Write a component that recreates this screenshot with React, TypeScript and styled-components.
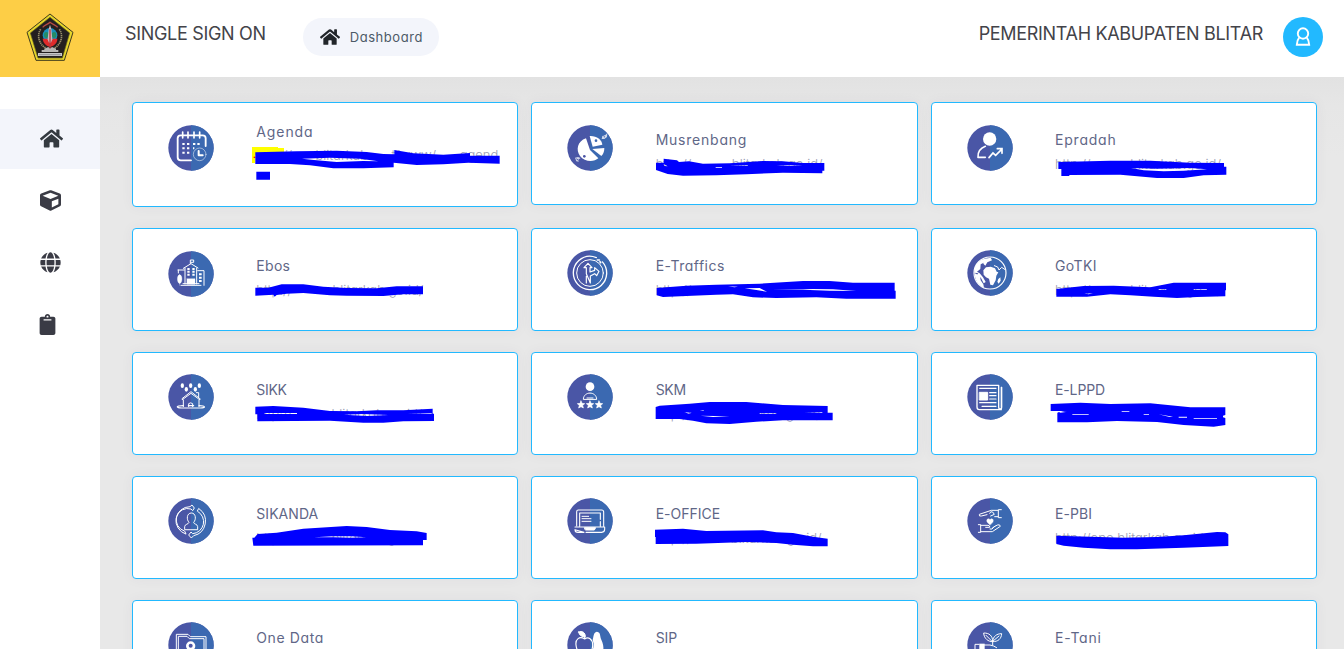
import React from 'react';
import styled, { createGlobalStyle } from 'styled-components';
import { FaHome, FaCube, FaGlobe, FaClipboard } from 'react-icons/fa';

const GlobalStyle = createGlobalStyle`
  * { box-sizing: border-box; }
  body {
    margin: 0;
    overflow: hidden;
    font-family: Inter, 'Open Sans', sans-serif;
    font-feature-settings: 'cv11' 1, 'calt' 0;
    color: #434349;
  }
`;

const Page = styled.div`
  display: grid;
  grid-template: 77px 1fr / 100px 1fr;
  height: 100vh;
  overflow: hidden;
`;

const Brand = styled.a`
  display: flex;
  justify-content: center;
  padding-top: 13px;
  background: #fdce46;
`;

const Header = styled.header`
  display: flex;
  align-items: flex-start;
  padding: 17px 21px 0 25px;
  background: #fff;
`;

const Heading = styled.h1<{ $tracking: number }>`
  margin: 5px 0 0;
  font-size: 18px;
  font-weight: 400;
  line-height: 24px;
  white-space: nowrap;
  letter-spacing: ${(p) => p.$tracking}px;
`;

const Pill = styled.a`
  display: flex;
  align-items: center;
  gap: 10px;
  width: 136px;
  height: 38px;
  margin: 1px auto 0 37px;
  padding-left: 17px;
  border-radius: 19px;
  background: #f3f5fb;
  color: #4c5a67;
  font-size: 13px;
  letter-spacing: 0.55px;
  svg { color: #212529; }
`;

const Avatar = styled.button`
  display: flex;
  align-items: center;
  justify-content: center;
  width: 40px;
  height: 40px;
  margin-left: 20px;
  padding: 0;
  border: 0;
  border-radius: 50%;
  background: #22b9ff;
`;

const Sidebar = styled.nav`
  display: flex;
  flex-direction: column;
  gap: 2px;
  padding-top: 32px;
  background: #fff;
`;

const NavItem = styled.a<{ $active?: boolean }>`
  display: flex;
  align-items: center;
  height: 60px;
  padding: 0 0 1px 40px;
  background: ${(p) => (p.$active ? '#f3f5fb' : 'transparent')};
  color: ${(p) => (p.$active ? '#343a40' : '#3a3b45')};
`;

const Clip = styled(FaClipboard)`
  margin-left: -2.6px;
`;

const Content = styled.main`
  padding: 25px 27px 0 32px;
  overflow: hidden;
  background: linear-gradient(#e2e2e2, #e6e6e6 28px, #e8e8e8 80px);
`;

const CardGrid = styled.div`
  display: grid;
  grid-template-columns: repeat(3, 1fr);
  gap: 21px 13px;
  align-items: start;
`;

const Card = styled.article<{ $tall?: boolean }>`
  position: relative;
  display: flex;
  height: ${(p) => (p.$tall ? 105 : 103)}px;
  padding: 22px 0 0 35px;
  border: 1px solid #22b9ff;
  border-radius: 4px;
  background: #fff;
  box-shadow: 0 0 13px rgba(82, 63, 105, 0.05);
`;

const Badge = styled.svg<{ $lift: boolean }>`
  flex: none;
  width: 46px;
  height: 46px;
  margin-top: ${(p) => (p.$lift ? -1 : 0)}px;
`;

const Info = styled.div<{ $raised?: boolean }>`
  margin: ${(p) => (p.$raised ? -3 : 5)}px 0 0 42.3px;
`;

const Title = styled.h2<{ $tracking: number }>`
  margin: 0;
  font-size: 14px;
  font-weight: 400;
  line-height: 20px;
  color: #5f6787;
  white-space: nowrap;
  letter-spacing: ${(p) => p.$tracking}px;
`;

const Link = styled.div<{ $width: number; $tight?: boolean }>`
  display: flex;
  justify-content: space-between;
  width: ${(p) => p.$width}px;
  margin-top: ${(p) => (p.$tight ? 4 : 5)}px;
  font-size: 13px;
  font-weight: 300;
  line-height: 18px;
  color: #9a9db3;
`;

const Marker = styled.svg`
  position: absolute;
  top: -1px;
  left: -1px;
  width: calc(100% + 2px);
  height: calc(100% + 2px);
  overflow: visible;
`;

const glyphs: Record<string, React.ReactNode> = {
  agenda: (
    <>
      <path d="M44 -6V-29q0-9-9-9H-31q-9 0-9 9V28q0 9 9 9H0" strokeWidth="5.5" />
      <path d="M-25-48v18M-9-48v18M9-48v18M26-48v18" strokeWidth="5" />
      <path d="M-26-12h7M-12-12h7M6-12h7M19-12h7M-26 1h7M-12 1h7M-26 14h7M-12 14h7M6 1h4" strokeWidth="6" strokeLinecap="butt" />
      <circle cx="26" cy="19" r="19" strokeWidth="2" opacity="0.75" />
      <path d="M23 9v13h12" strokeWidth="6" />
    </>
  ),
  pie: (
    <>
      <g fill="#fff" stroke="none">
        <path d="M-12-29C-38-20-43 6-30 24C-16 43 13 42 25 31L0 6Z" />
        <path d="M-1-36C20-37 35-26 37-10L8-4Z" />
        <path d="M7 3L43 0C43 11 40 18 34 24Z" />
        <path d="M37-36l9-3 6-6-1 12-8 6h-8zM-45 29l9-2 8 3-7 5 1 6-7-1z" opacity="0.75" />
      </g>
      <circle cx="18" cy="-22" r="4" fill="#3d69b1" stroke="none" />
      <circle cx="-17" cy="25" r="4" fill="#4b55a5" stroke="none" />
      <path d="M41-36l3 3M-40 33l4 3" stroke="#4b5eaa" strokeWidth="3" />
    </>
  ),
  person: (
    <>
      <circle cx="-1" cy="-27" r="20" fill="#fff" stroke="none" />
      <path d="M-14-5C-30 1-37 12-36 28H-14" strokeWidth="5" />
      <path d="M-3 29L9 15L17 22L35 4M22 2H36V16" strokeWidth="5" strokeLinejoin="miter" />
    </>
  ),
  school: (
    <>
      <path d="M-18-18V30M17-18V30M-23-17L0-31L21-18M-2-31V-42H8V-35H0M-39-12H-20M-38-12v9M20-10H39V34M-30 34H30M-24 29H24" />
      <path d="M-11-15h7M4-15h7M-11-7h7M4-7h7M-11 2h7M4 2h7M24 1h8M24 11h8M24 21h8" strokeWidth="6" strokeLinecap="butt" />
      <path d="M-12 14H12V31H-12ZM-34 2c9 0 9 24 0 27c-9-3-9-27 0-27ZM-34 28v6" fill="#fff" strokeWidth="1" />
    </>
  ),
  road: (
    <>
      <circle r="50" strokeWidth="4" strokeDasharray="290 25" transform="rotate(-42)" />
      <circle r="40" strokeWidth="3" />
      <path d="M-11 30V10M-11 2V-16H-18L-6-29L6-16H0V-3L14-8V-16L27-5L20 8L14 2L1 9V30Z" strokeWidth="3.5" />
      <path d="M22-39l6 0M30-34l2 3" strokeWidth="5" />
    </>
  ),
  earth: (
    <>
      <circle r="48" strokeWidth="3.5" />
      <g fill="#fff" stroke="none">
        <path d="M-22-41C-38-34-48-18-47-1l12 2-5 6 7 3 6 5 8 16 6-4-8-14-10-12-8-5 10-8 1-14 14-7 5-10-8 1z" />
        <path d="M-46 0C-46 22-34 38-18 44L-20 34L-28 22L-30 10Z" />
        <path d="M-20-8l8-9 14-2 13 5 5 10 5 2-6 10-2 14-8 15-8-2-4-18-9-4-7-8z" />
        <path d="M-18-42L2-46L6-38L-8-32L-14-22L-20-28ZM25 18l6-5 1 10-6 9-4-6z" />
      </g>
      <path d="M13-22l10 4 4 9 8-8 9 6" strokeWidth="3" />
    </>
  ),
  rain: (
    <>
      <g fill="#fff" stroke="none">
        <ellipse cx="-26" cy="-34" rx="5" ry="7" /><ellipse cx="-1" cy="-34" rx="5" ry="7" />
        <ellipse cx="25" cy="-34" rx="5" ry="7" /><ellipse cx="-14" cy="-23" rx="5" ry="7" />
        <ellipse cx="13" cy="-23" rx="5" ry="7" />
      </g>
      <path d="M-27 5L0-16L28 6M-26 8L0-11L26 8M-23 9V29M24 9V29M16-13h7V0M-7 29V20q6-5 12 0v9" />
      <path d="M-23 26C-48 26-45 33-28 33H28C45 33 45 26 24 26M-8 26H8" strokeWidth="3.5" />
    </>
  ),
  rating: (
    <>
      <circle cx="0" cy="-31" r="13" fill="#fff" stroke="none" />
      <path d="M-20 6C-19-18 19-18 20 6ZM-9 3H9" />
      <g fill="#fff" stroke="#fff" strokeWidth="2">
        {[-27, 0, 27].map((x) => (
          <path key={x} transform={`translate(${x} 23)`} d="M0-11L3-4L11-3L5 2L7 10L0 6L-7 10L-5 2L-11-3L-3-4Z" />
        ))}
      </g>
    </>
  ),
  news: (
    <>
      <path d="M-39-35H26V31q0 7 8 7H-32q-7 0-7-8ZM34-29V31M35-29V30q0 8-7 8" strokeWidth="4" />
      <path d="M-31-26H18M-1-13H18M-1-4H18M-1 6H18M-31 17H18M-24 28H18" strokeWidth="3.5" />
      <path d="M-31-14H-7V9H-31Z" fill="#fff" />
    </>
  ),
  cycle: (
    <>
      <path d="M-16 39A42 42 0 0 1-3-43L3-48L10-39L5-31L0-36A34 34 0 0 0-20 30ZM24-37A45 45 0 0 1 8 44L1 51L-7 42L0 33L5 38A36 36 0 0 0 20-29Z" />
      <path d="M-19 25V17C-19 9-7 10-6 4C-14-4-13-24 1-24S16-4 8 4C8 10 20 9 20 17V25Z" />
    </>
  ),
  laptop: (
    <>
      <path d="M-40 14V-28q0-5 5-5H35q6 0 6 6V15M-31 15V-24H31V-5M31 2V15M-45 18H44V25q0 9-9 9H-12M-18 34H-36q-9 0-9-8Z" strokeWidth="3.3" />
      <path d="M-16 20H17L13 27H-13Z" fill="#fff" />
      <path d="M-24-14H-4M-24-7H3M-24 1H3" />
    </>
  ),
  hands: (
    <>
      <path d="M34-34H25V-10H34M24-32H4L-32-20q-2 7 6 5L-9-19M-1-23q3-8 9-4l5 7-11 5M14-13H24" />
      <path d="M-35 11H-28V34H-35M-27 13H-6q7 1 5 6H-13M-27 32H7L31 16q-1-7-9-4L8 20M0 24H6l9-9" />
      <path d="M0 12L-9 3C-13-7-2-10 0-4C3-10 13-7 9 3Z" fill="#fff" strokeWidth="1" />
    </>
  ),
  folder: (
    <>
      <path d="M-44 38V-32H-9L-2-25H45V38M-38 38V-26H-12L-5-19H39V38" />
      <circle cx="-1" cy="3" r="14" fill="#fff" stroke="none" />
      <circle cx="-1" cy="2" r="6" fill="#4b55a5" stroke="none" />
    </>
  ),
  fruit: (
    <>
      <path d="M-16-18C-32-28-44-17-42 0C-40 20-26 34-16 27C-4 34 8 18 8 0C8-18-5-26-16-18ZM-16-18V-28" strokeWidth="3.5" />
      <path d="M-34-39C-23-44-14-37-14-25C-24-24-32-28-34-39Z" fill="#fff" />
      <path d="M20-40C10-38 11-24 8-16L11-4C11 12 6 18 3 27H35C46 8 37-8 33-18C30-29 31-40 20-40Z" fill="#fff" stroke="none" />
    </>
  ),
  plant: (
    <>
      <path d="M8 0V-10C-5-10-18-19-19-36C-3-36 8-29 8-10C9-26 20-34 35-34C34-18 24-10 9-10M-12-29L7-10L27-27M-45 30V-2H-33M-17 0H0q12 2 20 8" />
      <rect x="-32" y="-4" width="16" height="30" fill="#fff" stroke="none" />
    </>
  ),
};

const AppBadge = ({ name, lift }: { name: string; lift: boolean }) => (
  <Badge viewBox="-69 -69 138 138" $lift={lift}>
    <circle r="68" fill="#4a56a6" />
    <path d="M0-68A68 68 0 0 1 0 68Z" fill="#3b69b1" />
    <g fill="none" stroke="#fff" strokeWidth="3" strokeLinecap="round" strokeLinejoin="round">
      {glyphs[name]}
    </g>
  </Badge>
);

type AppEntry = {
  title: string;
  icon: string;
  tracking: number;
  tall?: boolean;
  link?: string[];
  linkWidth?: number;
  origin?: [number, number];
  strokes?: string;
  gaps?: string;
};

const host = ['http://', 'blitarkab.go.id/'];

const apps: AppEntry[] = [
  {
    title: 'Agenda', icon: 'agenda', tracking: 0.9, tall: true,
    link: ['http://', 'blitarkab', 't/www/', 'agend'], linkWidth: 242, origin: [6, 21],
    strokes: 'M376 172L500 169L620 167L710 171L760 177L793 178V165L850 175L940 179L1020 174V182H1109V206L1015 203L940 208L860 210L791 203V217L700 220L610 220L540 211L480 207H376ZM379 230H420V254H379Z',
    gaps: 'M516 191L600 188L690 191L745 199L700 198L620 201L552 195Z',
  },
  {
    title: 'Musrenbang', icon: 'pie', tracking: 0.78, link: host, linkWidth: 167, origin: [4, 21],
    strokes: 'M379 203H402V191L442 196L448 201L478 199L520 206L600 205L700 198L760 199L820 204H884V227H878V235L760 233L650 238L560 241L460 242L414 237L379 225Z',
    gaps: 'M402 207L414 214L404 213ZM558 216H577V218H558ZM600 213L655 211V213ZM740 211H780L819 213L780 213Z',
  },
  {
    title: 'Epradah', icon: 'person', tracking: 0.8, link: host, linkWidth: 166, origin: [2, 21],
    strokes: 'M384 201L540 197L660 197L780 203L881 204V215H888V239L820 241L760 249L680 249L570 239L417 240V243H393V222H384Z',
    gaps: 'M602 219L680 221L780 219L830 223L760 227L700 229L640 226Z',
  },
  {
    title: 'Ebos', icon: 'school', tracking: 0.3, link: host, linkWidth: 167, origin: [6, 9],
    strokes: 'M376 188H415L455 178L520 178L580 185L650 189L740 190L800 184H879V208L820 208L760 213L650 212L600 211L520 204L470 206L440 210L434 215L430 209L376 212Z',
  },
  {
    title: 'E-Traffics', icon: 'road', tracking: 0.5, link: ['http://', ''], linkWidth: 238, origin: [4, 9],
    strokes: 'M381 189L470 182L560 179L690 176L820 168H900L970 173H1095V197H1098V221H950L860 217L740 219L670 217L610 208L560 209L470 213L400 216L381 211Z',
    gaps: 'M595 184L625 185L614 187ZM645 190L690 189L712 200L680 195ZM725 195L850 192L910 193L980 198L900 197L820 194Z',
  },
  {
    title: 'GoTKI', icon: 'earth', tracking: 0.4, link: host, linkWidth: 166, origin: [2, 9],
    strokes: 'M378 192L460 183L550 182L660 187L730 173H887V196H885V214L800 216L740 219L670 215L600 211L540 208L470 215H378Z',
    gaps: 'M462 206L488 205L475 208ZM685 193H708V195H685ZM790 192H830V194H790Z',
  },
  {
    title: 'SIKK', icon: 'rain', tracking: -0.3, link: host, linkWidth: 166, origin: [6, 381],
    strokes: 'M376 545L430 543L520 548L600 558L680 559L740 556L820 556L908 551V566H912V588L820 589L760 593H700L600 587L382 589V568H376Z',
    gaps: 'M404 564H501V567H404ZM642 569L700 567L775 570L710 573ZM832 566L905 565V567Z',
  },
  {
    title: 'SKM', icon: 'rating', tracking: -0.3, link: host, linkWidth: 165, origin: [4, 381],
    strokes: 'M378 546L390 542L480 536L540 531H650L760 540L894 543V563H909V586L760 586L680 590L600 597L530 595L490 587L450 582H378Z',
    gaps: 'M464 562L486 563L478 566ZM510 557L522 556V558ZM512 572L600 574L550 576ZM690 565H740V567H690ZM824 562H878V564Z',
  },
  {
    title: 'E-LPPD', icon: 'news', tracking: -0.1, link: ['', ''], linkWidth: 166, origin: [2, 381],
    strokes: 'M361 537L450 533L540 537L660 535L780 547H885V570L878 572V577L885 579V600L850 605L760 600L680 591L560 588L470 592H381V563L404 558H361Z',
    gaps: 'M382 561L412 560L390 563ZM426 567H475V569H426ZM574 558H597V560H574ZM640 567H656V569H640ZM685 568L728 575L718 576ZM745 575H770V578H745ZM790 579H860V581H790Z',
  },
  {
    title: 'SIKANDA', icon: 'cycle', tracking: 0.05, link: host, linkWidth: 166, origin: [6, 18],
    strokes: 'M367 203H373L383 192L440 188L520 176L650 168L710 171L780 180L860 184L890 189V210H879V226L370 227Z',
    gaps: 'M552 202L610 199L665 199L709 202L660 203L610 202Z',
  },
  {
    title: 'E-OFFICE', icon: 'laptop', tracking: 0, link: host, linkWidth: 166, origin: [4, 18],
    strokes: 'M376 179L460 176L530 183L700 181L740 187L790 189L850 200L894 206V229L850 229L790 224L740 219L650 216L500 221L378 222V201H376Z',
  },
  {
    title: 'E-PBI', icon: 'hands', tracking: 0.1, link: ['http://epo.blitarkab.go.id'], linkWidth: 166, origin: [2, 18],
    strokes: 'M378 197L480 200L580 203L680 201L760 196L860 186L885 187L894 193V228L760 233L620 238H540L460 233L400 227L378 222Z',
  },
  { title: 'One Data', icon: 'folder', tracking: 0.6 },
  { title: 'SIP', icon: 'fruit', tracking: 0 },
  { title: 'E-Tani', icon: 'plant', tracking: 0.8 },
];

const Crest = () => (
  <svg width="48" height="49" viewBox="78 39 144 147">
    <path d="M150 42L219 97L193 181H108L81 97Z" fill="#e5d52b" stroke="#3f3a1c" strokeWidth="3" />
    <path d="M150 52L209 99L187 174H114L91 99Z" fill="#231f20" stroke="#65601d" strokeWidth="2" />
    <path d="M122 88C110 105 116 132 137 144M178 88C191 105 184 132 164 144" fill="none" stroke="#99906b" strokeWidth="5" strokeDasharray="4 2" />
    <path d="M128 82C136 73 143 74 150 67C158 74 164 73 173 82" fill="none" stroke="#b84b42" strokeWidth="4" />
    <circle cx="150" cy="106" r="22" fill="#1790bd" />
    <path d="M128 116H172C172 130 161 138 150 140C139 138 130 130 128 116Z" fill="#df2b2b" />
    <ellipse cx="139" cy="105" rx="7" ry="9" fill="#248c68" />
    <ellipse cx="162" cy="105" rx="7" ry="9" fill="#248c68" />
    <path d="M150 74L154 88L157 118L153 128H147L143 118L146 88Z" fill="#c9b9bd" />
    <path d="M150 88V146" stroke="#b63840" strokeWidth="4" />
    <path d="M133 146L145 141L150 146L156 141L168 146V150H175V156H125V150H133Z" fill="#b8b6b4" />
    <path d="M114 159H186V168H114Z" fill="#c7c7c9" />
    <path d="M118 164H182" stroke="#77777a" strokeWidth="3" strokeDasharray="4 2" />
  </svg>
);

export default function App() {
  return (
    <Page>
      <GlobalStyle />
      <Brand><Crest /></Brand>
      <Header>
        <Heading $tracking={-0.32}>SINGLE SIGN ON</Heading>
        <Pill><FaHome size={20} />Dashboard</Pill>
        <Heading $tracking={-0.32}>PEMERINTAH KABUPATEN BLITAR</Heading>
        <Avatar>
          <svg width="16" height="20" viewBox="0 0 16 20" fill="none" stroke="#fff" strokeWidth="1.9">
            <circle cx="8" cy="6.5" r="5.2" />
            <path d="M4.2 10.6C2.5 12.5 2 15 1.8 17.8H14.2C14 15 13.5 12.5 11.8 10.6" />
          </svg>
        </Avatar>
      </Header>
      <Sidebar>
        <NavItem $active><FaHome size={23} /></NavItem>
        <NavItem><FaCube size={21} /></NavItem>
        <NavItem><FaGlobe size={21} /></NavItem>
        <NavItem><Clip size={21} /></NavItem>
      </Sidebar>
      <Content>
        <CardGrid>
          {apps.map((app, index) => (
            <Card key={app.title} $tall={app.tall}>
              <AppBadge name={app.icon} lift={index > 3} />
              <Info $raised={app.tall}>
                <Title $tracking={app.tracking}>{app.title}</Title>
                {app.link && (
                  <Link $width={app.linkWidth ?? 166} $tight={app.tall}>
                    {app.link.map((part, i) => <span key={i}>{part}</span>)}
                  </Link>
                )}
              </Info>
              {app.strokes && app.origin && (
                <Marker
                  viewBox={`${app.origin[0]} ${app.origin[1]} 1159 ${app.tall ? 315 : 309}`}
                  preserveAspectRatio="none"
                >
                  {app.tall && <path d="M366 156H444V159H462V180H376V204H366Z" fill="#ff0" />}
                  {app.tall && <path d="M371 187H376" stroke="#f00" strokeWidth="4" />}
                  <path d={app.strokes + (app.gaps ?? '')} fill="#00f" fillRule="evenodd" />
                </Marker>
              )}
            </Card>
          ))}
        </CardGrid>
      </Content>
    </Page>
  );
}
